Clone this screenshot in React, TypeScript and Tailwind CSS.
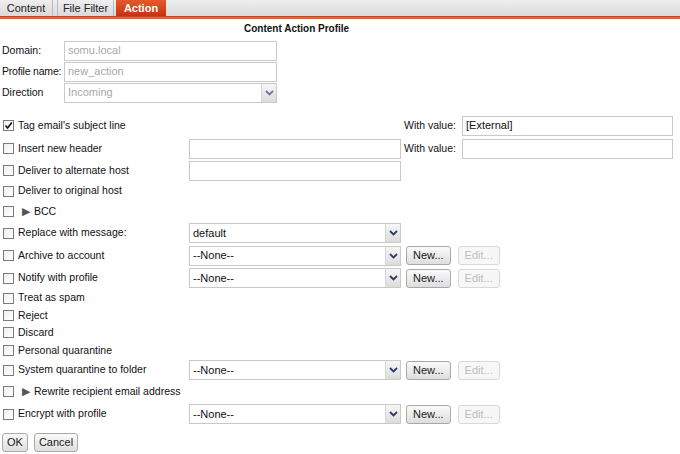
import React from "react";

const font = { fontFamily: '"Liberation Sans", Arial, sans-serif' };

function Chevron({ light = false }: { light?: boolean }) {
  return (
    <svg width="9" height="6" viewBox="0 0 9 6">
      <path d="M1 1 L4.5 4.5 L8 1" stroke={light ? "#6d7a96" : "#2b3d66"} strokeWidth="1.8" fill="none" />
    </svg>
  );
}

function Select({ value, w = "w-[212px]", disabled = false }: { value: string; w?: string; disabled?: boolean }) {
  return (
    <div className={`${w} h-[20px] border border-[#c9c9c9] bg-white flex items-stretch shrink-0`}>
      <div className={`flex-1 pl-[3px] flex items-center text-[11px] ${disabled ? "text-[#a8a8a8]" : "text-[#111]"}`}>{value}</div>
      <div className="w-[15px] border-l border-[#d6d6d6] bg-gradient-to-b from-[#f6f6f6] to-[#dcdcdc] flex items-center justify-center">
        <Chevron light={disabled} />
      </div>
    </div>
  );
}

function Input({ value = "", w = "w-[212px]", disabled = false }: { value?: string; w?: string; disabled?: boolean }) {
  return (
    <div className={`${w} h-[20px] border border-[#c9c9c9] bg-white flex items-center pl-[3px] text-[11px] shrink-0 ${disabled ? "text-[#a8a8a8]" : "text-[#111]"}`}>
      {value}
    </div>
  );
}

function Check({ checked = false }: { checked?: boolean }) {
  return (
    <div className="w-[11px] h-[11px] border border-[#7a7a7a] bg-gradient-to-br from-[#f0f0f0] to-white flex items-center justify-center shrink-0">
      {checked && (
        <svg width="9" height="9" viewBox="0 0 9 9">
          <path d="M1.5 4.5 L3.6 7 L7.8 1.5" stroke="#111" strokeWidth="1.6" fill="none" />
        </svg>
      )}
    </div>
  );
}

function Btn({ label, disabled = false, px = "px-[6px]" }: { label: string; disabled?: boolean; px?: string }) {
  return (
    <div
      className={`h-[19px] ${px} rounded-[3px] flex items-center text-[11px] ${
        disabled
          ? "border border-[#d8d8d8] text-[#bdbdbd] bg-[#f7f7f7]"
          : "border border-[#a9a9a9] text-[#1a1a1a] bg-gradient-to-b from-[#fafafa] to-[#dedede]"
      }`}
    >
      {label}
    </div>
  );
}

function Row({
  h,
  checked,
  label,
  tri,
  children,
}: {
  h: string;
  checked?: boolean;
  label: string;
  tri?: boolean;
  children?: React.ReactNode;
}) {
  return (
    <div className={`flex items-center ${h}`}>
      <div className="w-[189px] flex items-center pl-[3px] shrink-0 whitespace-nowrap">
        <Check checked={checked} />
        {tri ? (
          <span className="ml-[8px] flex items-center">
            <span className="text-[11px] text-[#555] mr-[4px] leading-none">▶</span>
            <span className="text-[10.5px] text-[#111]">{label}</span>
          </span>
        ) : (
          <span className="ml-[4px] text-[10.5px] text-[#111]">{label}</span>
        )}
      </div>
      {children}
    </div>
  );
}

function SelRow(props: { h: string; label: string; value: string; buttons?: boolean }) {
  return (
    <Row h={props.h} label={props.label}>
      <Select value={props.value} />
      {props.buttons && (
        <div className="flex items-center ml-[5px] gap-[7px]">
          <Btn label="New..." />
          <Btn label="Edit..." disabled />
        </div>
      )}
    </Row>
  );
}

export default function App() {
  return (
    <div className="w-[680px] h-[454px] bg-white overflow-hidden" style={font}>
      <div className="h-[16px] bg-gradient-to-b from-[#efefef] to-[#d9d9d9] flex items-stretch">
        <div className="w-[53px] border-r border-[#b9b9b9] flex items-center justify-center text-[11px] text-[#222]">Content</div>
        <div className="w-[4px]" />
        <div className="w-[57px] border-x border-[#b9b9b9] flex items-center justify-center text-[11px] text-[#222]">File Filter</div>
        <div className="w-[2px]" />
        <div className="w-[50px] bg-gradient-to-b from-[#e35a2c] to-[#c8300f] flex items-center justify-center text-[11px] font-bold text-white">Action</div>
      </div>
      <div className="h-[3px] bg-[#d46a45] border-t border-[#b84a26]" />
      <div className="h-[16px] flex items-center text-[10px] font-bold text-[#111] pl-[244px] mt-[1px]">
        Content Action Profile
      </div>
      <div className="flex flex-col pt-[4px]">
        <div className="flex items-center h-[21px]">
          <div className="w-[64px] pl-[2px] text-[10.5px] text-[#111] whitespace-nowrap">Domain:</div>
          <Input value="somu.local" w="w-[213px]" disabled />
        </div>
        <div className="flex items-center h-[21px]">
          <div className="w-[64px] pl-[2px] text-[10.5px] tracking-[-0.2px] text-[#111] whitespace-nowrap">Profile name:</div>
          <Input value="new_action" w="w-[213px]" disabled />
        </div>
        <div className="flex items-center h-[21px]">
          <div className="w-[64px] pl-[2px] text-[10.5px] text-[#111] whitespace-nowrap">Direction</div>
          <Select value="Incoming" w="w-[213px]" disabled />
        </div>
      </div>
      <div className="flex flex-col mt-[11px]">
        <Row h="h-[23px]" checked label="Tag email's subject line">
          <div className="flex-1" />
          <div className="w-[58px] text-[10.5px] text-[#111] whitespace-nowrap">With value:</div>
          <Input value="[External]" w="w-[211px]" />
          <div className="w-[7px]" />
        </Row>
        <Row h="h-[23px]" label="Insert new header">
          <Input w="w-[212px]" />
          <div className="flex-1" />
          <div className="w-[58px] text-[10.5px] text-[#111] whitespace-nowrap">With value:</div>
          <Input w="w-[211px]" />
          <div className="w-[7px]" />
        </Row>
        <Row h="h-[21px]" label="Deliver to alternate host">
          <Input w="w-[212px]" />
        </Row>
        <Row h="h-[20px]" label="Deliver to original host" />
        <Row h="h-[21px]" tri label="BCC" />
        <SelRow h="h-[22px]" label="Replace with message:" value="default" />
        <SelRow h="h-[23px]" label="Archive to account" value="--None--" buttons />
        <SelRow h="h-[22px]" label="Notify with profile" value="--None--" buttons />
        <Row h="h-[18px]" label="Treat as spam" />
        <Row h="h-[17px]" label="Reject" />
        <Row h="h-[17px]" label="Discard" />
        <Row h="h-[19px]" label="Personal quarantine" />
        <SelRow h="h-[20px]" label="System quarantine to folder" value="--None--" buttons />
        <Row h="h-[23px]" tri label="Rewrite recipient email address" />
        <SelRow h="h-[22px]" label="Encrypt with profile" value="--None--" buttons />
      </div>
      <div className="flex items-center gap-[6px] pl-[2px] mt-[8px]">
        <Btn label="OK" px="px-[4px]" />
        <Btn label="Cancel" px="px-[4px]" />
      </div>
    </div>
  );
}
